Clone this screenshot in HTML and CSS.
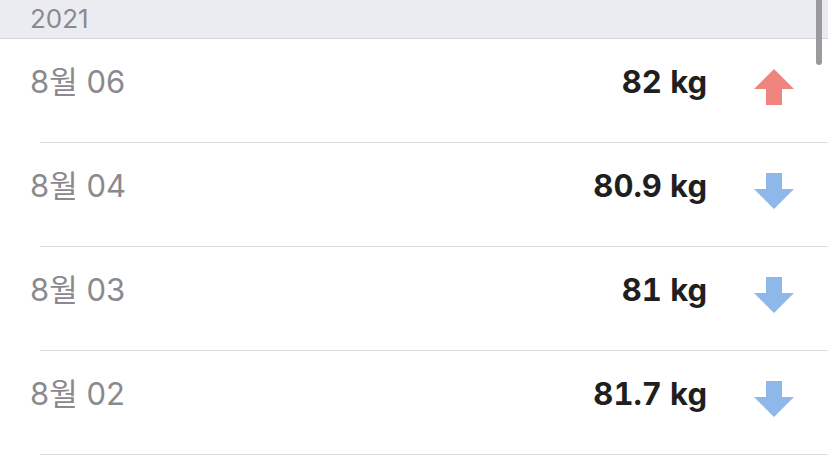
FILE: index.html
```html
<!DOCTYPE html>
<html lang="ko">
<head>
<meta charset="utf-8">
<link rel="stylesheet" href="styles.css">
</head>
<body>
<div class="list">
  <div class="section-header">2021</div>
  <div class="row">
    <span class="date">8월 06</span>
    <span class="weight">82 kg</span>
    <svg class="trend" viewBox="0 0 40 36" width="40" height="36"><polygon class="up" points="20,0 40,20 28,20 28,36 12,36 12,20 0,20"/></svg>
  </div>
  <div class="row">
    <span class="date">8월 04</span>
    <span class="weight">80.9 kg</span>
    <svg class="trend" viewBox="0 0 40 36" width="40" height="36"><polygon class="down" points="12,0 28,0 28,16 40,16 20,36 0,16 12,16"/></svg>
  </div>
  <div class="row">
    <span class="date">8월 03</span>
    <span class="weight">81 kg</span>
    <svg class="trend" viewBox="0 0 40 36" width="40" height="36"><polygon class="down" points="12,0 28,0 28,16 40,16 20,36 0,16 12,16"/></svg>
  </div>
  <div class="row">
    <span class="date">8월 02</span>
    <span class="weight">81.7 kg</span>
    <svg class="trend" viewBox="0 0 40 36" width="40" height="36"><polygon class="down" points="12,0 28,0 28,16 40,16 20,36 0,16 12,16"/></svg>
  </div>
</div>
<div class="scrollbar"></div>
</body>
</html>
```
FILE: styles.css
```css
html, body {
  margin: 0;
  padding: 0;
  background: #ffffff;
  overflow: hidden;
}
body {
  width: 828px;
  height: 461px;
  position: relative;
  font-family: Inter, "Noto Sans CJK KR", sans-serif;
}
.list {
  display: flex;
  flex-direction: column;
}
.section-header {
  box-sizing: border-box;
  height: 39px;
  padding-left: 30px;
  background: #ebecf1;
  border-bottom: 1px solid #d6d6da;
  font-size: 26px;
  line-height: 38px;
  color: #8a8a8e;
}
.row {
  box-sizing: border-box;
  height: 104px;
  margin-left: 40px;
  padding-top: 25px;
  padding-right: 34px;
  border-bottom: 1px solid #dcdcdf;
  display: flex;
  align-items: flex-start;
}
.date {
  margin-left: -10px;
  flex: 1;
  font-size: 31px;
  line-height: 36px;
  color: #8a8a8e;
}
.weight {
  font-size: 31px;
  line-height: 36px;
  font-weight: 700;
  font-variant-numeric: tabular-nums;
  color: #1f1f21;
}
.trend {
  margin-left: 47px;
  margin-top: 5px;
  display: block;
}
.up { fill: #f0847f; }
.down { fill: #8fb8ea; }
.scrollbar {
  position: absolute;
  top: 0;
  right: 6px;
  width: 6px;
  height: 65px;
  background: #9b9b9d;
  border-radius: 0 0 3px 3px;
}
```
